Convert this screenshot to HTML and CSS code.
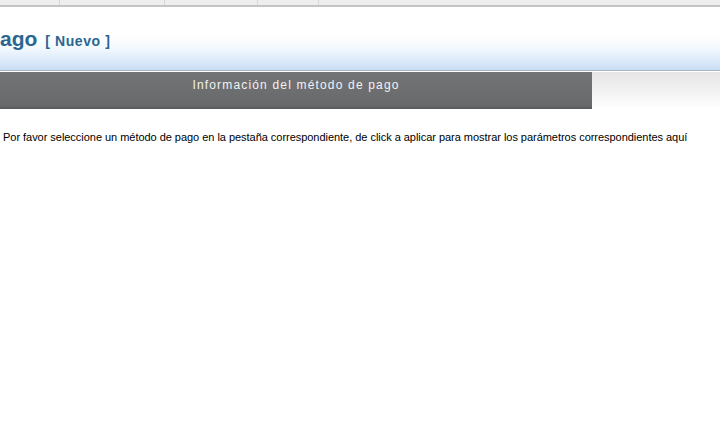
FILE: index.html
```html
<!DOCTYPE html>
<html lang="es">
<head>
<meta charset="utf-8">
<title>Método de pago</title>
<link rel="stylesheet" href="styles.css">
</head>
<body>
<div class="topbar">
  <span class="tab t1"></span>
  <span class="tab t2"></span>
  <span class="tab t3"></span>
  <span class="tab t4"></span>
  <span class="tab t5"></span>
</div>
<header class="header">
  <h1 class="title">ago <span class="sub">[ Nuevo ]</span></h1>
</header>
<div class="band">
  <div class="bar">Información del método de pago</div>
  <div class="fade"></div>
</div>
<p class="msg">Por favor seleccione un método de pago en la pestaña correspondiente, de click a aplicar para mostrar los parámetros correspondientes aquí</p>
</body>
</html>
```
FILE: styles.css
```css
html, body {
  margin: 0;
  padding: 0;
  background: #ffffff;
  font-family: "Liberation Sans", Arial, sans-serif;
}
.topbar {
  display: flex;
  height: 5px;
  background: #eeeeee;
  border-bottom: 2px solid #c4c4c4;
}
.tab {
  border-right: 1px solid #d8d8d8;
}
.t1 { width: 59px; }
.t2 { width: 104px; }
.t3 { width: 92px; }
.t4 { width: 60px; }
.t5 { flex: 1; border-right: none; }
.header {
  height: 63px;
  background: linear-gradient(to bottom, #ffffff 0%, #ffffff 45%, #f3f9fe 65%, #c9def6 100%);
  border-bottom: 1px solid #a9b6c2;
  display: flex;
  align-items: flex-end;
}
.title {
  margin: 0 0 17px 0;
  font-size: 21px;
  font-weight: bold;
  color: #2b6690;
  line-height: 24px;
}
.sub {
  font-size: 14px;
  margin-left: 2px;
  letter-spacing: 0.6px;
}
.band {
  display: flex;
  height: 37px;
  border-top: 1px solid #ffffff;
}
.bar {
  width: 592px;
  background: linear-gradient(to bottom, #737476 0%, #68696b 90%, #58595a 100%);
  color: #f2f2f2;
  font-size: 12px;
  letter-spacing: 1.17px;
  text-align: center;
  line-height: 27px;
}
.fade {
  flex: 1;
  background: linear-gradient(to bottom, #e6e4e4 0%, #ffffff 100%);
}
.msg {
  margin: 21px 0 0 3px;
  font-size: 11px;
  color: #000000;
  line-height: 14px;
  letter-spacing: -0.035px;
}
```
